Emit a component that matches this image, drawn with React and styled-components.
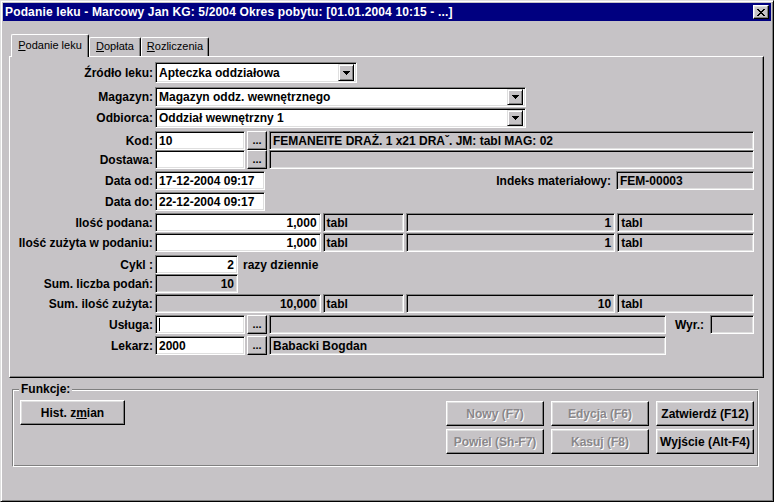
import React from 'react';
import styled, { createGlobalStyle } from 'styled-components';

const face = '#c6c3c6';

const GlobalStyle = createGlobalStyle`
  html, body { margin: 0; padding: 0; background: ${face}; }
  body { font-family: "Liberation Sans", Arial, sans-serif; font-size: 12px; color: #000; }
  * { box-sizing: border-box; }
`;

const Window = styled.div`
  width: 774px;
  height: 502px;
  background: ${face};
  border: 1px solid;
  border-color: #dfdfdf #000 #000 #dfdfdf;
  box-shadow: inset 1px 1px #fff, inset -1px -1px #808080;
  padding: 2px;
  display: flex;
  flex-direction: column;
`;

const TitleBar = styled.div`
  height: 18px;
  background: #000080;
  color: #fff;
  font-weight: bold;
  font-size: 12px;
  display: flex;
  align-items: center;
  padding: 0 2px;
`;

const TitleText = styled.div`
  flex: 1;
  white-space: nowrap;
  letter-spacing: 0.15px;
`;

const CloseBtn = styled.div`
  width: 16px;
  height: 14px;
  background: ${face};
  border: 1px solid;
  border-color: #fff #000 #000 #fff;
  box-shadow: inset -1px -1px #808080, inset 1px 1px #dfdfdf;
  display: flex;
  align-items: center;
  justify-content: center;
`;

const Body = styled.div`
  flex: 1;
  display: flex;
  flex-direction: column;
  padding: 13px 7px 0 6px;
`;

const TabStrip = styled.div`
  height: 22px;
  display: flex;
  align-items: flex-end;
  padding-left: 2px;
  position: relative;
  z-index: 1;
`;

const Tab = styled.div`
  width: ${p => p.$w}px;
  height: ${p => (p.$active ? 23 : 19)}px;
  margin-bottom: ${p => (p.$active ? -1 : 0)}px;
  background: ${face};
  border-top: 1px solid #fff;
  border-left: 1px solid #fff;
  border-right: 1px solid #000;
  border-radius: 2px 2px 0 0;
  box-shadow: inset -1px 0 #808080;
  font-size: 11px;
  display: flex;
  justify-content: center;
  padding-top: ${p => (p.$active ? 4 : 2)}px;
  white-space: nowrap;
  u { text-underline-offset: 1px; }
`;

const Panel = styled.div`
  height: 322px;
  background: ${face};
  border: 1px solid;
  border-color: #fff #000 #000 #fff;
  box-shadow: inset -1px -1px #808080;
  padding: 0 9px 0 0;
  display: flex;
  flex-direction: column;
`;

const Row = styled.div`
  display: flex;
  align-items: stretch;
  height: ${p => p.$h || 19}px;
  margin-top: ${p => p.$mt || 0}px;
`;

const Label = styled.div`
  width: 143px;
  margin-right: 2px;
  display: flex;
  align-items: center;
  justify-content: flex-end;
  font-weight: bold;
  white-space: nowrap;
`;

const SideLabel = styled.div`
  display: flex;
  align-items: center;
  font-weight: bold;
  white-space: nowrap;
  margin-left: ${p => (p.$auto ? 'auto' : `${p.$ml || 0}px`)};
  margin-right: ${p => p.$mr || 0}px;
`;

const Field = styled.div`
  width: ${p => p.$w}px;
  margin-left: ${p => p.$ml || 0}px;
  background: ${p => (p.$ro ? face : '#fff')};
  border: 1px solid;
  border-color: #808080 #fff #fff #808080;
  box-shadow: inset 1px 1px #000, inset -1px -1px #dfdfdf;
  display: flex;
  align-items: center;
  justify-content: ${p => (p.$right ? 'flex-end' : 'flex-start')};
  padding: ${p => (p.$right ? '0 3px 0 2px' : '0 2px 0 3px')};
  font-weight: bold;
  white-space: nowrap;
  overflow: hidden;
`;

const SelectText = styled.span`
  flex: 1;
`;

const DropBtn = styled.div`
  width: 16px;
  align-self: stretch;
  margin: 1px 0;
  background: ${face};
  border: 1px solid;
  border-color: #dfdfdf #000 #000 #dfdfdf;
  box-shadow: inset 1px 1px #fff, inset -1px -1px #808080;
  display: flex;
  align-items: center;
  justify-content: center;
`;

const DotsBtn = styled.div`
  width: 20px;
  margin: 0 2px;
  background: ${face};
  border: 1px solid;
  border-color: #fff #000 #000 #fff;
  box-shadow: inset -1px -1px #808080;
  display: flex;
  align-items: flex-end;
  justify-content: center;
  padding-bottom: 3px;
  font-weight: bold;
  font-size: 11px;
  line-height: 1;
`;

const Caret = styled.span`
  width: 1px;
  height: 13px;
  background: #000;
`;

const GroupBox = styled.div`
  position: relative;
  margin: 11px 5px 0 3px;
  height: 78px;
  border: 1px solid;
  border-color: #808080 #fff #fff #808080;
  box-shadow: inset 1px 1px #fff, inset -1px -1px #808080;
  display: flex;
  justify-content: space-between;
  align-items: flex-start;
  padding: 10px 4px 0 7px;
`;

const GroupCaption = styled.span`
  position: absolute;
  top: -8px;
  left: 6px;
  padding: 0 2px;
  background: ${face};
  font-weight: bold;
  line-height: 14px;
`;

const ButtonGrid = styled.div`
  margin-top: 1px;
  display: grid;
  grid-template-columns: repeat(3, 98px);
  grid-auto-rows: 25px;
  column-gap: 7px;
  row-gap: 3px;
`;

const Button = styled.div`
  width: ${p => p.$w || 98}px;
  height: 25px;
  background: ${face};
  border: 1px solid;
  border-color: #fff #000 #000 #fff;
  box-shadow: inset -1px -1px #808080, inset 1px 1px #dfdfdf;
  display: flex;
  align-items: center;
  justify-content: center;
  font-weight: bold;
  white-space: nowrap;
  color: ${p => (p.$disabled ? '#8a878a' : '#000')};
  text-shadow: ${p => (p.$disabled ? '1px 1px #fff' : 'none')};
  u { text-underline-offset: 1px; }
`;

const CloseGlyph = () => {
  const px = [
    '11....11',
    '.11..11.',
    '..1111..',
    '...11...',
    '..1111..',
    '.11..11.',
    '11....11',
  ];
  return (
    <svg width="8" height="7" shapeRendering="crispEdges">
      {px.flatMap((r, y) => [...r].map((c, x) => c === '1' ? <rect key={`${x}-${y}`} x={x} y={y} width="1" height="1" fill="#000" /> : null))}
    </svg>
  );
};

const ArrowGlyph = () => (
  <svg width="7" height="4" shapeRendering="crispEdges">
    <rect x="0" y="0" width="7" height="1" fill="#000" />
    <rect x="1" y="1" width="5" height="1" fill="#000" />
    <rect x="2" y="2" width="3" height="1" fill="#000" />
    <rect x="3" y="3" width="1" height="1" fill="#000" />
  </svg>
);

function Select({ w, value }) {
  return (
    <Field $w={w} style={{ paddingRight: 2 }}>
      <SelectText>{value}</SelectText>
      <DropBtn><ArrowGlyph /></DropBtn>
    </Field>
  );
}

export default function App() {
  return (
    <>
      <GlobalStyle />
      <Window>
        <TitleBar>
          <TitleText>Podanie leku - Marcowy Jan KG: 5/2004 Okres pobytu: [01.01.2004 10:15 - ...]</TitleText>
          <CloseBtn><CloseGlyph /></CloseBtn>
        </TitleBar>
        <Body>
          <TabStrip>
            <Tab $active $w={78}><span><u>P</u>odanie leku</span></Tab>
            <Tab $w={52}><span><u>D</u>opłata</span></Tab>
            <Tab $w={68}><span><u>R</u>ozliczenia</span></Tab>
          </TabStrip>
          <Panel>
            <Row $h={21} $mt={5}>
              <Label>Źródło leku:</Label>
              <Select w={202} value="Apteczka oddziałowa" />
            </Row>
            <Row $h={20} $mt={4}>
              <Label>Magazyn:</Label>
              <Select w={371} value="Magazyn oddz. wewnętrznego" />
            </Row>
            <Row $h={20} $mt={1}>
              <Label>Odbiorca:</Label>
              <Select w={371} value="Oddział wewnętrzny 1" />
            </Row>
            <Row $mt={3}>
              <Label>Kod:</Label>
              <Field $w={90}>10</Field>
              <DotsBtn>...</DotsBtn>
              <Field $w={485} $ro>FEMANEITE DRAŻ. 1 x21 DRAˇ. JM: tabl MAG: 02</Field>
            </Row>
            <Row>
              <Label>Dostawa:</Label>
              <Field $w={90} />
              <DotsBtn>...</DotsBtn>
              <Field $w={485} $ro />
            </Row>
            <Row $mt={2}>
              <Label>Data od:</Label>
              <Field $w={110}>17-12-2004 09:17</Field>
              <SideLabel $auto $mr={5}>Indeks materiałowy:</SideLabel>
              <Field $w={138} $ro>FEM-00003</Field>
            </Row>
            <Row $mt={2}>
              <Label>Data do:</Label>
              <Field $w={110}>22-12-2004 09:17</Field>
            </Row>
            <Row $mt={2}>
              <Label>Ilość podana:</Label>
              <Field $w={166} $right>1,000</Field>
              <Field $w={82} $ml={2} $ro>tabl</Field>
              <Field $w={209} $ml={2} $ro $right>1</Field>
              <Field $w={137} $ml={2} $ro>tabl</Field>
            </Row>
            <Row $mt={1}>
              <Label>Ilość zużyta w podaniu:</Label>
              <Field $w={166} $right>1,000</Field>
              <Field $w={82} $ml={2} $ro>tabl</Field>
              <Field $w={209} $ml={2} $ro $right>1</Field>
              <Field $w={137} $ml={2} $ro>tabl</Field>
            </Row>
            <Row $mt={3}>
              <Label>Cykl :</Label>
              <Field $w={83} $right>2</Field>
              <SideLabel $ml={5}>razy dziennie</SideLabel>
            </Row>
            <Row>
              <Label>Sum. liczba podań:</Label>
              <Field $w={83} $ro $right>10</Field>
            </Row>
            <Row $mt={1}>
              <Label>Sum. ilość zużyta:</Label>
              <Field $w={166} $ro $right>10,000</Field>
              <Field $w={82} $ml={2} $ro>tabl</Field>
              <Field $w={209} $ml={2} $ro $right>10</Field>
              <Field $w={137} $ml={2} $ro>tabl</Field>
            </Row>
            <Row $mt={2}>
              <Label>Usługa:</Label>
              <Field $w={90}><Caret /></Field>
              <DotsBtn>...</DotsBtn>
              <Field $w={397} $ro />
              <SideLabel $auto $mr={6}>Wyr.:</SideLabel>
              <Field $w={44} $ro />
            </Row>
            <Row $mt={2}>
              <Label>Lekarz:</Label>
              <Field $w={90}>2000</Field>
              <DotsBtn>...</DotsBtn>
              <Field $w={397} $ro>Babacki Bogdan</Field>
            </Row>
          </Panel>
          <GroupBox>
            <GroupCaption>Funkcje:</GroupCaption>
            <Button $w={105}>Hist. z<u>m</u>ian</Button>
            <ButtonGrid>
              <Button $disabled>Nowy (F7)</Button>
              <Button $disabled>Edycja (F6)</Button>
              <Button>Zatwierdź (F12)</Button>
              <Button $disabled>Powiel (Sh-F7)</Button>
              <Button $disabled>Kasuj (F8)</Button>
              <Button>Wyjście (Alt-F4)</Button>
            </ButtonGrid>
          </GroupBox>
        </Body>
      </Window>
    </>
  );
}
